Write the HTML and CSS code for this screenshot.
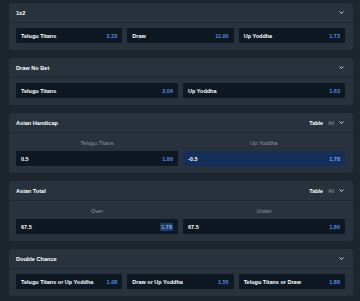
FILE: index.html
```html
<!DOCTYPE html>
<html lang="en">
<head>
  <meta charset="UTF-8">
  <meta name="viewport" content="width=device-width, initial-scale=1.0">
  <title>Markets</title>
  <link rel="stylesheet" href="styles.css">
</head>
<body>
  <div class="markets">
    <section class="market">
      <header class="head">
        <div class="title">1x2</div>
        <div class="tools">
          <svg class="chevron" viewBox="0 0 10 6"><path d="M1.2 1.2L5 4.8 8.8 1.2"/></svg>
        </div>
      </header>
      <div class="body">
        <div class="outcomes cols-3">
          <div class="outcome"><span class="name">Telugu Titans</span><span class="odds">2.23</span></div>
          <div class="outcome"><span class="name">Draw</span><span class="odds">11.00</span></div>
          <div class="outcome"><span class="name">Up Yoddha</span><span class="odds">1.73</span></div>
        </div>
      </div>
    </section>

    <section class="market">
      <header class="head">
        <div class="title">Draw No Bet</div>
        <div class="tools">
          <svg class="chevron" viewBox="0 0 10 6"><path d="M1.2 1.2L5 4.8 8.8 1.2"/></svg>
        </div>
      </header>
      <div class="body">
        <div class="outcomes cols-2">
          <div class="outcome"><span class="name">Telugu Titans</span><span class="odds">2.06</span></div>
          <div class="outcome"><span class="name">Up Yoddha</span><span class="odds">1.63</span></div>
        </div>
      </div>
    </section>

    <section class="market">
      <header class="head">
        <div class="title">Asian Handicap</div>
        <div class="tools">
          <span class="table">Table</span>
          <span class="all">All</span>
          <svg class="chevron" viewBox="0 0 10 6"><path d="M1.2 1.2L5 4.8 8.8 1.2"/></svg>
        </div>
      </header>
      <div class="body">
        <div class="outcomes cols-2">
          <div class="label">Telugu Titans</div>
          <div class="label">Up Yoddha</div>
          <div class="outcome"><span class="name">0.5</span><span class="odds">1.86</span></div>
          <div class="outcome selected"><span class="name">-0.5</span><span class="odds">1.78</span></div>
        </div>
      </div>
    </section>

    <section class="market">
      <header class="head">
        <div class="title">Asian Total</div>
        <div class="tools">
          <span class="table">Table</span>
          <span class="all">All</span>
          <svg class="chevron" viewBox="0 0 10 6"><path d="M1.2 1.2L5 4.8 8.8 1.2"/></svg>
        </div>
      </header>
      <div class="body">
        <div class="outcomes cols-2">
          <div class="label">Over</div>
          <div class="label">Under</div>
          <div class="outcome"><span class="name">67.5</span><span class="odds boxed">1.78</span></div>
          <div class="outcome"><span class="name">67.5</span><span class="odds">1.86</span></div>
        </div>
      </div>
    </section>

    <section class="market">
      <header class="head">
        <div class="title">Double Chance</div>
        <div class="tools">
          <svg class="chevron" viewBox="0 0 10 6"><path d="M1.2 1.2L5 4.8 8.8 1.2"/></svg>
        </div>
      </header>
      <div class="body">
        <div class="outcomes cols-3">
          <div class="outcome"><span class="name">Telugu Titans or Up Yoddha</span><span class="odds">1.08</span></div>
          <div class="outcome"><span class="name">Draw or Up Yoddha</span><span class="odds">1.55</span></div>
          <div class="outcome"><span class="name">Telugu Titans or Draw</span><span class="odds">1.88</span></div>
        </div>
      </div>
    </section>
  </div>
</body>
</html>
```

FILE: styles.css
```css
* {
  padding: 0;
  margin: 0;
  box-sizing: border-box;
  font-family: "Liberation Sans", Arial, sans-serif;
}

body {
  background-color: #1d262f;
  color: #fff;
}

.markets {
  display: flex;
  flex-direction: column;
  gap: 8px;
  padding: 3px 7px 0 9px;

  & > .market {
    background-color: #27323d;
    border-radius: 3px;

    & > .head {
      height: 20px;
      display: flex;
      align-items: center;
      justify-content: space-between;
      padding: 0 9px 0 7px;
      border-bottom: 1px solid #202a34;

      & > .title {
        font-size: 5.6px;
        font-weight: 700;
      }

      & > .tools {
        display: flex;
        align-items: center;
        gap: 5px;

        .table {
          font-size: 5.4px;
          font-weight: 700;
        }

        .all {
          font-size: 5.4px;
          color: #8c96a1;
        }

        .chevron {
          width: 5px;
          height: 3px;
          fill: none;
          stroke: #e6eaee;
          stroke-width: 1.8;
        }
      }
    }

    & > .body {
      padding: 5px 8px 7px 7px;

      & > .outcomes {
        display: grid;
        column-gap: 5px;

        &.cols-3 {
          grid-template-columns: repeat(3, 1fr);
        }

        &.cols-2 {
          grid-template-columns: repeat(2, 1fr);
        }

        .label {
          height: 17px;
          margin-top: -4px;
          display: flex;
          align-items: center;
          justify-content: center;
          font-size: 5.6px;
          color: #8c96a1;
        }

        .outcome {
          height: 15px;
          display: flex;
          align-items: center;
          justify-content: space-between;
          padding: 0 5px;
          background-color: #0e1822;
          border-radius: 1px;
          font-size: 5.5px;
          font-weight: 700;

          & > .odds {
            color: #4d8de3;
          }

          & > .odds.boxed {
            background-color: #1c3a66;
            color: #7fb2f2;
            padding: 1px 1px;
          }

          &.selected {
            background-color: #14305a;

            & > .odds {
              color: #75a9ee;
            }
          }
        }
      }
    }
  }
}
```
